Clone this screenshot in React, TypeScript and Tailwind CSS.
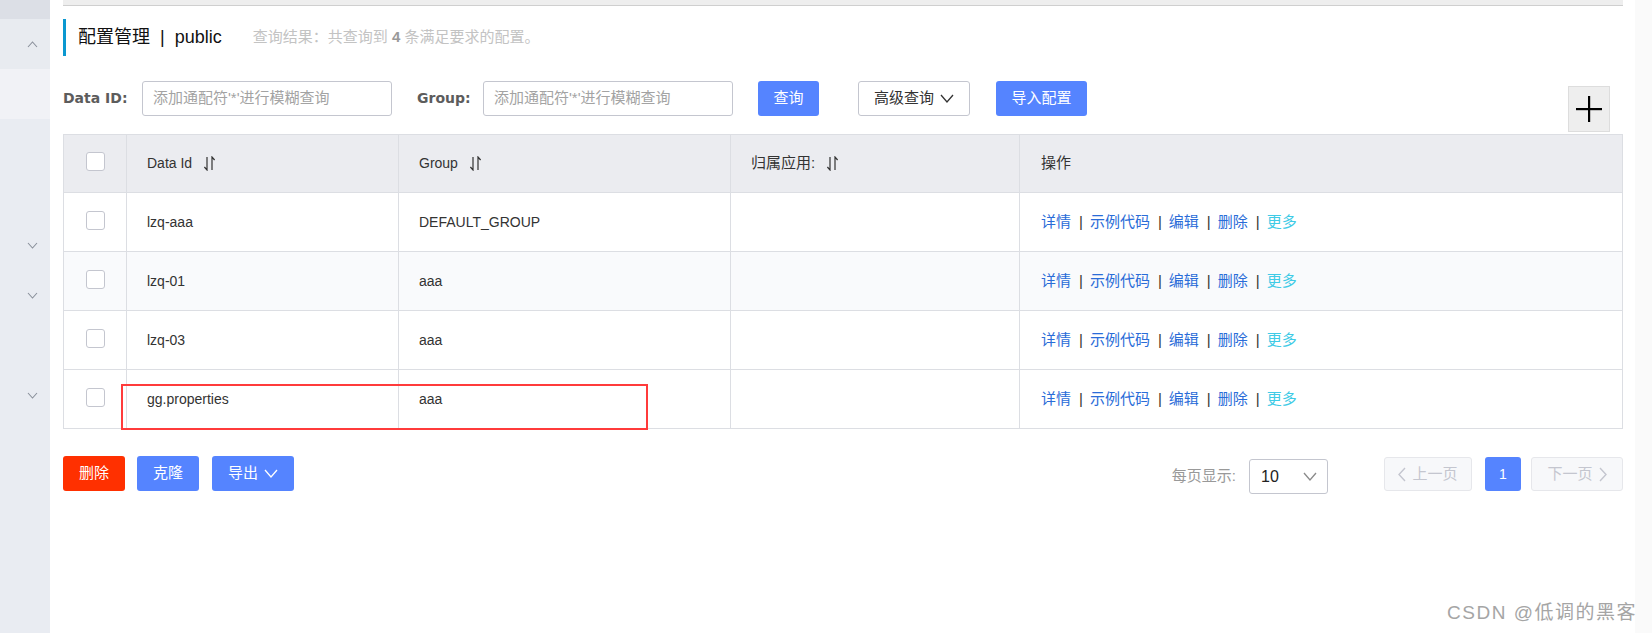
import React from "react";

const rows = [
  { id: "lzq-aaa", group: "DEFAULT_GROUP", bg: "bg-white" },
  { id: "lzq-01", group: "aaa", bg: "bg-[#f9fafc]" },
  { id: "lzq-03", group: "aaa", bg: "bg-white" },
  { id: "gg.properties", group: "aaa", bg: "bg-white" },
];

function SortIcon() {
  return (
    <svg width="13" height="15" viewBox="0 0 13 15" fill="none" stroke="#333" strokeWidth="1.2" className="ml-[11px]">
      <path d="M4 1v13L1.4 11" />
      <path d="M9 14V1l2.6 3" />
    </svg>
  );
}

function Chevron({ up = false, className = "" }: { up?: boolean; className?: string }) {
  return (
    <svg width="11" height="7" viewBox="0 0 11 7" fill="none" stroke="#8a909b" strokeWidth="1.1" className={className}>
      {up ? <path d="M1 6l4.5-5 4.5 5" /> : <path d="M1 1l4.5 5 4.5-5" />}
    </svg>
  );
}

function DownArrow({ color = "#333", className = "" }: { color?: string; className?: string }) {
  return (
    <svg width="14" height="9" viewBox="0 0 14 9" fill="none" stroke={color} strokeWidth="1.3" className={className}>
      <path d="M1 1l6 7 6-7" />
    </svg>
  );
}

function Checkbox() {
  return <div className="w-[19px] h-[19px] rounded-[3px] border border-[#c4c6cf] bg-white" />;
}

function Actions() {
  const sep = <span className="text-[#333] ml-[8px] mr-[7px]">|</span>;
  return (
    <div className="flex items-center text-[15px] text-[#2a6cd8]">
      <span>详情</span>
      {sep}
      <span>示例代码</span>
      {sep}
      <span>编辑</span>
      {sep}
      <span>删除</span>
      {sep}
      <span className="text-[#3fcbe6]">更多</span>
    </div>
  );
}

export default function App() {
  return (
    <div className="relative flex w-full h-[633px] bg-white overflow-hidden font-['Liberation_Sans','Noto_Sans_CJK_SC',sans-serif] text-[#333]">
      {/* left nav (collapsed) */}
      <aside className="w-[50px] shrink-0 flex flex-col bg-[#e9ecf2]">
        <div className="h-[19px] bg-[#dcdfe6]" />
        <div className="h-[50px] bg-[#e8ebf0] flex items-center justify-end pr-[12px]">
          <Chevron up />
        </div>
        <div className="h-[50px] bg-[#f1f2f6]" />
        <div className="h-[121px]" />
        <div className="h-[10px] flex items-center justify-end pr-[12px]">
          <Chevron />
        </div>
        <div className="h-[40px]" />
        <div className="h-[10px] flex items-center justify-end pr-[12px]">
          <Chevron />
        </div>
        <div className="h-[90px]" />
        <div className="h-[10px] flex items-center justify-end pr-[12px]">
          <Chevron />
        </div>
      </aside>

      {/* main */}
      <main className="flex-1 flex flex-col pl-[13px] pr-[12px]">
        <div className="h-[6px] bg-[#eeeeee] border-b border-[#cfcfcf]" />

        <div className="mt-[13px] h-[37px] border-l-[3px] border-[#0b98d0] flex items-center pl-[12px]">
          <span className="text-[18px] text-[#111]">配置管理</span>
          <span className="text-[18px] text-[#111] ml-[10px] mr-[10px]">|</span>
          <span className="text-[18px] text-[#111]">public</span>
          <span className="ml-[31px] text-[15px] text-[#c3c3c3]">
            查询结果：共查询到 <b className="text-[#999]">4</b> 条满足要求的配置。
          </span>
        </div>

        <div className="mt-[25px] flex items-start">
          <label className="w-[79px] h-[35px] flex items-center font-['DejaVu_Sans',sans-serif] font-bold text-[14px] text-[#5c5c5c]">
            Data ID:
          </label>
          <div className="w-[250px] h-[35px] border border-[#c4c6cf] rounded-[3px] flex items-center px-[10px] text-[15px] text-[#a3a3a3]">
            添加通配符'*'进行模糊查询
          </div>
          <label className="ml-[25px] w-[66px] h-[35px] flex items-center font-['DejaVu_Sans',sans-serif] font-bold text-[14px] text-[#5c5c5c]">
            Group:
          </label>
          <div className="w-[250px] h-[35px] border border-[#c4c6cf] rounded-[3px] flex items-center px-[10px] text-[15px] text-[#a3a3a3]">
            添加通配符'*'进行模糊查询
          </div>
          <button className="ml-[25px] w-[61px] h-[35px] rounded-[3px] bg-[#5584ff] text-white text-[15px]">查询</button>
          <button className="ml-[39px] w-[112px] h-[35px] rounded-[3px] border border-[#c4c6cf] bg-white text-[15px] text-[#333] flex items-center justify-center gap-[6px]">
            高级查询
            <DownArrow />
          </button>
          <button className="ml-[26px] w-[91px] h-[35px] rounded-[3px] bg-[#5584ff] text-white text-[15px]">导入配置</button>
          <div className="ml-auto mr-[13px] mt-[5px] w-[42px] h-[46px] bg-[#eeeeee] border border-[#dddddd] flex items-center justify-center">
            <svg width="26" height="26" viewBox="0 0 26 26">
              <rect x="0" y="12" width="26" height="2.2" fill="#000" />
              <rect x="12" y="0" width="2.2" height="26" fill="#000" />
            </svg>
          </div>
        </div>

        {/* table */}
        <div className="relative mt-[2px] border-t border-l border-[#dcdee3] grid grid-cols-[63px_272px_332px_289px_1fr]">
          <div className="h-[58px] bg-[#ebecf0] border-r border-b border-[#dcdee3] flex items-center justify-center pb-[4px]">
            <Checkbox />
          </div>
          <div className="h-[58px] bg-[#ebecf0] border-r border-b border-[#dcdee3] flex items-center pl-[20px] text-[14px]">
            Data Id
            <SortIcon />
          </div>
          <div className="h-[58px] bg-[#ebecf0] border-r border-b border-[#dcdee3] flex items-center pl-[20px] text-[14px]">
            Group
            <SortIcon />
          </div>
          <div className="h-[58px] bg-[#ebecf0] border-r border-b border-[#dcdee3] flex items-center pl-[20px] text-[15px]">
            归属应用:
            <SortIcon />
          </div>
          <div className="h-[58px] bg-[#ebecf0] border-r border-b border-[#dcdee3] flex items-center pl-[21px] text-[15px]">
            操作
          </div>

          {rows.map((r) => (
            <React.Fragment key={r.id}>
              <div className={`h-[59px] ${r.bg} border-r border-b border-[#dcdee3] flex items-center justify-center pb-[4px]`}>
                <Checkbox />
              </div>
              <div className={`h-[59px] ${r.bg} border-r border-b border-[#dcdee3] flex items-center pl-[20px] text-[14px]`}>
                {r.id}
              </div>
              <div className={`h-[59px] ${r.bg} border-r border-b border-[#dcdee3] flex items-center pl-[20px] text-[14px]`}>
                {r.group}
              </div>
              <div className={`h-[59px] ${r.bg} border-r border-b border-[#dcdee3]`} />
              <div className={`h-[59px] ${r.bg} border-r border-b border-[#dcdee3] flex items-center pl-[21px]`}>
                <Actions />
              </div>
            </React.Fragment>
          ))}

          {/* annotation box */}
          <div className="absolute left-[57px] top-[249px] w-[527px] h-[46px] border-2 border-[#ff3b3b] pointer-events-none" />
        </div>

        {/* footer */}
        <div className="mt-[27px] flex items-start">
          <button className="w-[62px] h-[35px] rounded-[3px] bg-[#ff3000] text-white text-[15px]">删除</button>
          <button className="ml-[12px] w-[62px] h-[35px] rounded-[3px] bg-[#5584ff] text-white text-[15px]">克隆</button>
          <button className="ml-[13px] w-[82px] h-[35px] rounded-[3px] bg-[#5584ff] text-white text-[15px] flex items-center justify-center gap-[6px]">
            导出
            <DownArrow color="#fff" />
          </button>

          <div className="ml-auto flex items-center mt-[3px]">
            <span className="text-[15px] text-[#999]">每页显示:</span>
            <div className="ml-[13px] w-[79px] h-[35px] border border-[#c4c6cf] rounded-[3px] flex items-center justify-between pl-[11px] pr-[10px] text-[16px] text-[#222]">
              10
              <DownArrow color="#8a8a8a" />
            </div>
          </div>
          <button className="ml-[56px] mt-[1px] w-[88px] h-[34px] rounded-[3px] border border-[#e6e7eb] bg-[#f7f8fa] text-[15px] text-[#c4c6cf] flex items-center justify-center gap-[6px]">
            <svg width="8" height="15" viewBox="0 0 8 15" fill="none" stroke="#c4c6cf" strokeWidth="1.4">
              <path d="M7 1L1 7.5 7 14" />
            </svg>
            上一页
          </button>
          <button className="ml-[13px] mt-[1px] w-[36px] h-[34px] rounded-[3px] bg-[#5584ff] text-white text-[14px]">1</button>
          <button className="ml-[10px] mt-[1px] w-[92px] h-[34px] rounded-[3px] border border-[#e6e7eb] bg-[#f7f8fa] text-[15px] text-[#c4c6cf] flex items-center justify-center gap-[6px]">
            下一页
            <svg width="8" height="15" viewBox="0 0 8 15" fill="none" stroke="#c4c6cf" strokeWidth="1.4">
              <path d="M1 1l6 6.5L1 14" />
            </svg>
          </button>
        </div>
      </main>

      {/* scrollbar track */}
      <div className="w-[17px] shrink-0 bg-[#fafafa]" />

      {/* watermark */}
      <div className="absolute right-[15px] top-[603px] text-[19px] leading-none tracking-[1.5px] text-[#a5a5a5] font-['Liberation_Sans','Noto_Sans_CJK_SC',sans-serif] [text-shadow:0_0_1px_#fff]">
        CSDN @低调的黑客
      </div>
    </div>
  );
}
